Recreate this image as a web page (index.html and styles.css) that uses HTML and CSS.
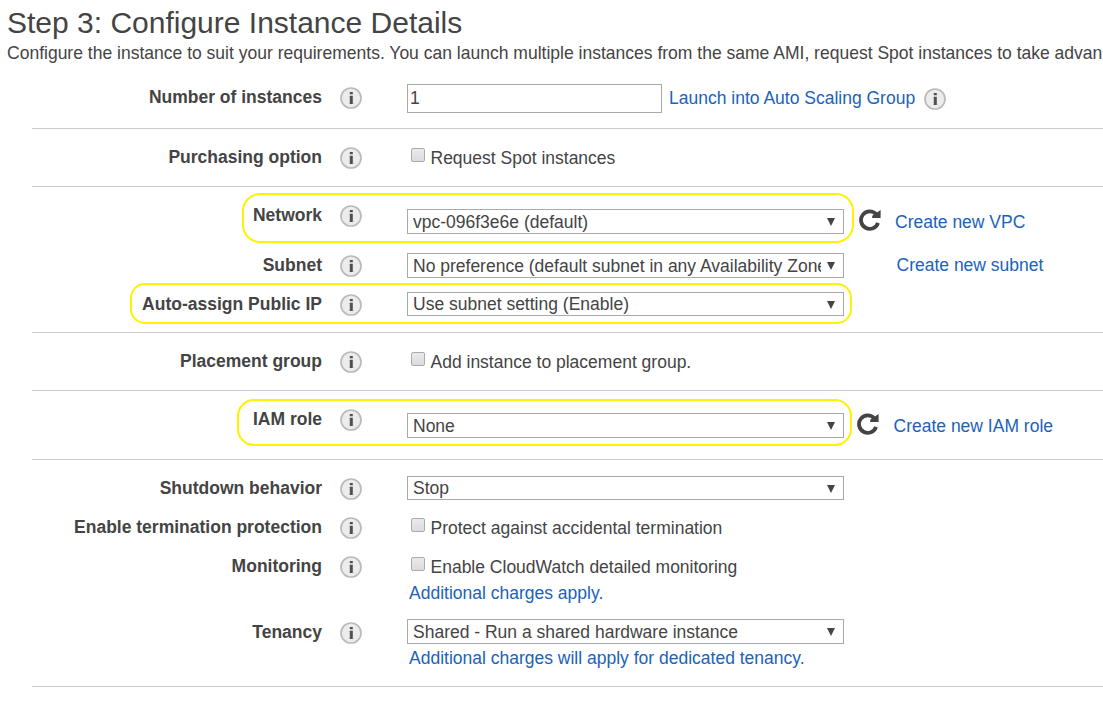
FILE: index.html
```html
<!DOCTYPE html>
<html lang="en">
<head>
<meta charset="utf-8">
<title>Configure Instance Details</title>
<link rel="stylesheet" href="styles.css">
</head>
<body>
<svg class="defs" width="0" height="0" aria-hidden="true">
  <symbol id="info" viewBox="0 0 22 22">
    <circle cx="11" cy="11" r="10" fill="#ececec" stroke="#bababa" stroke-width="1.7"/>
    <path d="M9.800 5h3v2.300h-3zM9.800 8.800h3V17h-3z" fill="#505050"/>
    <path d="M9 9h.8v1H9zM9 16h.8v1H9zM12.800 16h.8v1h-.8z" fill="#b0b0b0"/>
  </symbol>
  <symbol id="refresh" viewBox="0 0 22 22">
    <path d="M17.300 5.400A8.700 8.700 0 1 0 19 13.800" fill="none" stroke="#444" stroke-width="3.800"/>
    <path d="M21.600 1v8H13.200v-2.200z" fill="#444"/>
  </symbol>
</svg>
<header class="page-header">
  <h1 class="title">Step 3: Configure Instance Details</h1>
  <p class="intro">Configure the instance to suit your requirements. You can launch multiple instances from the same AMI, request Spot instances to take advan</p>
</header>
<main class="form">
  <section class="section first">
    <div class="row">
      <div class="label">Number of instances</div><svg class="info"><use href="#info"/></svg>
      <div class="control lead-2">
        <div class="field">1</div>
        <a class="link beside">Launch into Auto Scaling Group</a><svg class="info inline"><use href="#info"/></svg>
      </div>
    </div>
  </section>
  <section class="section">
    <div class="row">
      <div class="label">Purchasing option</div><svg class="info"><use href="#info"/></svg>
      <div class="control check"><span class="box"></span><span>Request Spot instances</span></div>
    </div>
  </section>
  <section class="section">
    <div class="row network">
      <div class="highlight hl-network"></div>
      <div class="label">Network</div><svg class="info"><use href="#info"/></svg>
      <div class="control lead-9">
        <div class="select"><span class="value">vpc-096f3e6e (default)</span><span class="arrow"></span></div>
        <svg class="refresh"><use href="#refresh"/></svg><a class="link create">Create new VPC</a>
      </div>
    </div>
    <div class="row subnet">
      <div class="label">Subnet</div><svg class="info"><use href="#info"/></svg>
      <div class="control lead-3">
        <div class="select"><span class="value">No preference (default subnet in any Availability Zone)</span><span class="arrow"></span></div>
        <a class="link create-subnet">Create new subnet</a>
      </div>
    </div>
    <div class="row public-ip">
      <div class="highlight hl-ip"></div>
      <div class="label">Auto-assign Public IP</div><svg class="info"><use href="#info"/></svg>
      <div class="control lead-3">
        <div class="select short"><span class="value">Use subnet setting (Enable)</span><span class="arrow"></span></div>
      </div>
    </div>
  </section>
  <section class="section">
    <div class="row">
      <div class="label">Placement group</div><svg class="info"><use href="#info"/></svg>
      <div class="control check"><span class="box"></span><span>Add instance to placement group.</span></div>
    </div>
  </section>
  <section class="section">
    <div class="row iam">
      <div class="highlight hl-iam"></div>
      <div class="label">IAM role</div><svg class="info"><use href="#info"/></svg>
      <div class="control lead-9">
        <div class="select"><span class="value">None</span><span class="arrow"></span></div>
        <svg class="refresh near"><use href="#refresh"/></svg><a class="link create">Create new IAM role</a>
      </div>
    </div>
  </section>
  <section class="section">
    <div class="row shutdown">
      <div class="label">Shutdown behavior</div><svg class="info"><use href="#info"/></svg>
      <div class="control lead-3">
        <div class="select short"><span class="value">Stop</span><span class="arrow"></span></div>
      </div>
    </div>
    <div class="row termination">
      <div class="label">Enable termination protection</div><svg class="info"><use href="#info"/></svg>
      <div class="control check"><span class="box"></span><span>Protect against accidental termination</span></div>
    </div>
    <div class="row monitoring">
      <div class="label">Monitoring</div><svg class="info"><use href="#info"/></svg>
      <div class="stack">
        <div class="control check"><span class="box"></span><span>Enable CloudWatch detailed monitoring</span></div>
        <a class="link note">Additional charges apply.</a>
      </div>
    </div>
    <div class="row tenancy">
      <div class="label">Tenancy</div><svg class="info"><use href="#info"/></svg>
      <div class="stack">
        <div class="control lead-2">
          <div class="select"><span class="value">Shared - Run a shared hardware instance</span><span class="arrow"></span></div>
        </div>
        <a class="link note">Additional charges will apply for dedicated tenancy.</a>
      </div>
    </div>
  </section>
</main>
</body>
</html>
```
FILE: styles.css
```css
* { box-sizing: border-box; }
body {
  margin: 0;
  height: 701px;
  overflow: hidden;
  background: #fff;
  color: #444;
  font: 17.5px/22px "Liberation Sans", Arial, sans-serif;
  white-space: nowrap;
}
.defs { position: absolute; }
.page-header { height: 70px; padding: 5px 0 0 7px; }
.title { margin: 0; font-size: 30px; font-weight: 400; line-height: 36px; }
.intro { margin: 1px 0 0; font-size: 17.52px; }
.form { margin-left: 32px; }
.section { padding-top: 13px; border-bottom: 1px solid #ccc; }
.section.first { padding-top: 12px; }
.row { position: relative; display: flex; align-items: flex-start; height: 44px; }
.first .row { height: 46px; }
.row.network { height: 50px; }
.row.subnet, .row.shutdown, .row.termination { height: 39px; }
.row.public-ip { height: 43px; }
.row.iam { height: 55px; }
.row.monitoring { height: 66px; }
.row.tenancy { height: 69px; }
.label { width: 290px; padding-top: 4px; text-align: right; font-weight: 700; }
.info { flex: none; width: 22px; height: 22px; margin: 5px 45px 0 18px; }
.info.inline { margin: 4px 0 0 8.5px; }
.control { display: flex; align-items: flex-start; }
.lead-2 { padding-top: 2px; }
.lead-3 { padding-top: 3px; }
.lead-9 { padding-top: 9px; }
.field { width: 255px; height: 29px; padding: 2px; border: 1px solid #a9a9a9; }
.link { color: #1b62bb; }
.beside { margin: 3px 0 0 7px; }
.select {
  display: flex;
  width: 437px;
  height: 25px;
  padding-left: 5px;
  border: 1px solid #a9a9a9;
  line-height: 24px;
}
.select.short { height: 24px; line-height: 23px; }
.value { width: 408px; overflow: hidden; }
.arrow {
  width: 8px;
  height: 8px;
  margin: 8px 0 0 6px;
  background: #444;
  clip-path: polygon(0 0, 100% 0, 50% 100%);
}
.refresh { width: 22px; height: 22px; margin-left: 14.5px; }
.refresh.near { margin-left: 12.5px; }
.create { margin: 2px 0 0 14.5px; }
.near + .create { margin-left: 15px; }
.create-subnet { margin: 1px 0 0 52.5px; }
.check { padding: 5px 0 0 4px; gap: 5.5px; }
.box {
  width: 14px;
  height: 14px;
  margin-top: 1px;
  border: 1px solid #ababab;
  border-radius: 2px;
  background: linear-gradient(#eaeaea, #dcdcdc);
}
.note { display: block; margin: 4px 0 0 2px; }
.tenancy .note { margin-top: 3px; }
.highlight { position: absolute; border: 2px solid #fff200; }
.hl-network { left: 210px; top: -7px; width: 612px; height: 50px; border-radius: 18px; }
.hl-ip { left: 98px; top: -6px; width: 722px; height: 41px; border-radius: 15px; }
.hl-iam { left: 205px; top: -5px; width: 615px; height: 47px; border-radius: 17px; }
```
